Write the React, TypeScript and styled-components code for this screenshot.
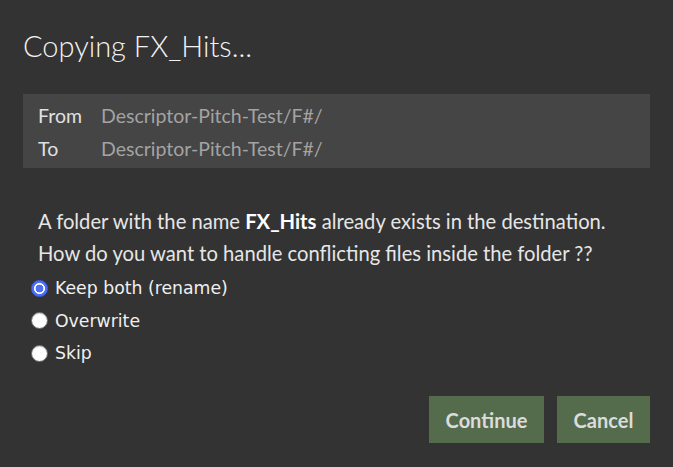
import React, { useState } from "react";
import styled, { createGlobalStyle } from "styled-components";

const GlobalStyle = createGlobalStyle`
  html, body {
    margin: 0;
    padding: 0;
    background: #333333;
  }
  body {
    font-family: "Lato", "Liberation Sans", sans-serif;
  }
`;

const Dialog = styled.div`
  width: 673px;
  height: 467px;
  box-sizing: border-box;
  padding: 26px 23px 0 23px;
  background: #333333;
  color: #e6e6e6;
  display: flex;
  flex-direction: column;
`;

const Title = styled.h1`
  margin: 0;
  font-size: 29px;
  line-height: 40px;
  font-weight: 300;
  color: #f2f2f2;
`;

const PathBox = styled.div`
  margin-top: 28px;
  background: #454545;
  padding: 5px 15px 3px;
  display: grid;
  grid-template-columns: 63px 1fr;
  grid-auto-rows: 33px;
  align-items: center;
  font-size: 19.5px;
`;

const PathLabel = styled.span`
  color: #e0e0e0;
`;

const PathValue = styled.span`
  color: #a3a3a3;
`;

const Message = styled.p`
  margin: 37px 0 0 15px;
  font-size: 20.2px;
  line-height: 32px;
  color: #e6e6e6;

  b {
    color: #ffffff;
    font-weight: 700;
  }
`;

const Options = styled.div`
  margin-top: 3px;
  margin-left: 8px;
  display: flex;
  flex-direction: column;
`;

const Option = styled.label`
  display: flex;
  align-items: center;
  height: 32.5px;
  gap: 7px;
  font-family: "DejaVu Sans", "Liberation Sans", sans-serif;
  font-size: 17.3px;
  color: #f0f0f0;
  cursor: pointer;
`;

const Radio = styled.input.attrs({ type: "radio" })`
  appearance: none;
  margin: 0;
  width: 17px;
  height: 17px;
  border-radius: 50%;
  box-sizing: border-box;
  border: 1px solid #666666;
  background: #ffffff;
  box-shadow: inset 0 1px 1px rgba(0, 0, 0, 0.15);
  flex-shrink: 0;

  &:checked {
    border: 1px solid #3f5fe0;
    box-shadow: none;
    background: radial-gradient(circle, #4d70f7 0 3.6px, #ffffff 4.2px 5.2px, #4d70f7 5.8px);
  }
`;

const Actions = styled.div`
  margin-top: auto;
  margin-bottom: 24px;
  display: flex;
  justify-content: flex-end;
  gap: 13px;
`;

const Button = styled.button<{ $w: number }>`
  width: ${(p) => p.$w}px;
  height: 47px;
  border: none;
  background: #546c4c;
  color: #dcdcdc;
  font-family: "Lato", "Liberation Sans", sans-serif;
  font-weight: 700;
  font-size: 20px;
  cursor: pointer;
`;

const choices = ["Keep both (rename)", "Overwrite", "Skip"];

export default function App() {
  const [choice, setChoice] = useState(choices[0]);
  return (
    <>
      <GlobalStyle />
      <Dialog>
        <Title>Copying FX_Hits...</Title>
        <PathBox>
          <PathLabel>From</PathLabel>
          <PathValue>Descriptor-Pitch-Test/F#/</PathValue>
          <PathLabel>To</PathLabel>
          <PathValue>Descriptor-Pitch-Test/F#/</PathValue>
        </PathBox>
        <Message>
          A folder with the name <b>FX_Hits</b> already exists in the destination.
          <br />
          How do you want to handle conflicting files inside the folder ??
        </Message>
        <Options>
          {choices.map((c) => (
            <Option key={c}>
              <Radio name="conflict" checked={choice === c} onChange={() => setChoice(c)} />
              {c}
            </Option>
          ))}
        </Options>
        <Actions>
          <Button $w={115}>Continue</Button>
          <Button $w={93}>Cancel</Button>
        </Actions>
      </Dialog>
    </>
  );
}
